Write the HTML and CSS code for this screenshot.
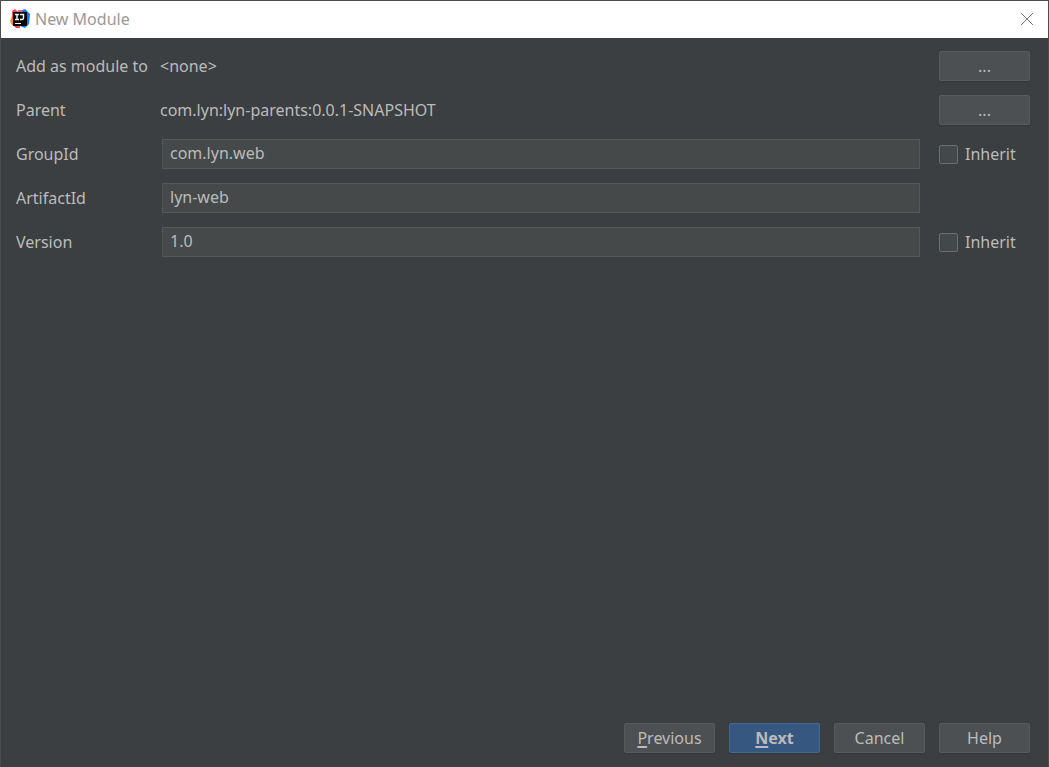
FILE: index.html
```html
<!DOCTYPE html>
<html lang="en">
<head>
<meta charset="utf-8">
<title>New Module</title>
<link rel="stylesheet" href="styles.css">
</head>
<body>
<div class="dialog">
  <header class="titlebar">
    <svg class="logo" viewBox="0 0 20 20" aria-hidden="true">
      <path d="M2 2 L5 0 L8 3 L8 11 L1 11 L2 7 Z" fill="#fc4a63"/>
      <path d="M0 11 L6 9 L6 18 L1 15 Z" fill="#f98b3c"/>
      <path d="M2 15 L10 15 L10 19 L6 19 Z" fill="#e9425a"/>
      <path d="M10 2 L15 0 L20 5 L19 15 L15 19 L10 17 Z" fill="#087cfa"/>
      <path d="M6 3 L9 1 L12 1 L13 4 Z" fill="#fe5f92"/>
      <rect x="3" y="3" width="14" height="14" fill="#080808"/>
      <path d="M5 5.500 H9 M7 5.500 V10.500 M5 10.500 H9 M10 5.500 H13.500 V9 Q13.500 10.500 12 10.500 H10" fill="none" stroke="#fff" stroke-width="1.400"/>
      <path d="M5 14.500 H11" stroke="#fff"/>
    </svg>
    <h1 class="title">New Module</h1>
    <button class="close" type="button" aria-label="Close">
      <svg class="close-icon" viewBox="0 0 14 14" aria-hidden="true"><path d="M1 1 L13 13 M13 1 L1 13" stroke="#777777" fill="none"/></svg>
    </button>
  </header>
  <form class="content">
    <div class="fields">
      <span class="label">Add as module to</span>
      <span class="value">&lt;none&gt;</span>
      <button class="button" type="button" aria-label="Choose module">...</button>

      <span class="label">Parent</span>
      <span class="value">com.lyn:lyn-parents:0.0.1-SNAPSHOT</span>
      <button class="button" type="button" aria-label="Choose parent">...</button>

      <label class="label" for="group">GroupId</label>
      <input class="text" id="group" type="text" value="com.lyn.web">
      <label class="inherit"><input class="check" type="checkbox">Inherit</label>

      <label class="label" for="artifact">ArtifactId</label>
      <input class="text" id="artifact" type="text" value="lyn-web">
      <span></span>

      <label class="label" for="version">Version</label>
      <input class="text" id="version" type="text" value="1.0">
      <label class="inherit"><input class="check" type="checkbox">Inherit</label>
    </div>
    <footer class="actions">
      <button class="button" type="button"><span class="key">P</span>revious</button>
      <button class="button primary" type="submit"><span class="key">N</span>ext</button>
      <button class="button" type="button">Cancel</button>
      <button class="button" type="button">Help</button>
    </footer>
  </form>
</div>
</body>
</html>
```

FILE: styles.css
```css
* {
  box-sizing: border-box;
}

body {
  margin: 0;
  background: #3c3f41;
  color: #bbbbbb;
  font: 16px/22px "Noto Sans", "Open Sans", sans-serif;
}

button,
input {
  color: inherit;
  font: inherit;
}

.dialog {
  display: flex;
  flex-direction: column;
  min-height: 100vh;
  border: 1px solid #4b4d50;
  border-bottom-color: #3c3f41;
}

.titlebar {
  display: flex;
  align-items: center;
  height: 37px;
  padding: 0 14px 2px 9px;
  background: #ffffff;
  color: #999999;
}

.logo {
  width: 20px;
  height: 20px;
  margin-right: 5px;
}

.title {
  flex: 1;
  margin: 0;
  font-size: 16px;
  font-weight: 400;
}

.close {
  display: flex;
  padding: 0;
  border: 0;
  background: none;
}

.close-icon {
  width: 14px;
  height: 14px;
}

.content {
  display: flex;
  flex: 1;
  flex-direction: column;
  justify-content: space-between;
  padding: 13px 18px 13px 15px;
}

.fields {
  display: grid;
  grid-template-columns: 144px 1fr 91px;
  grid-auto-rows: 30px;
  row-gap: 14px;
  align-items: center;
}

.text {
  width: auto;
  height: 30px;
  margin: 0 19px 0 2px;
  padding: 0 7px 2px;
  border: 1px solid #56595a;
  border-radius: 0;
  background: #45494a;
  outline: 0;
}

.button {
  width: 91px;
  height: 30px;
  padding: 0;
  border: 1px solid #585b5d;
  border-radius: 2px;
  background: #4c5052;
  box-shadow: 0 1px 1px #353839;
  line-height: 28px;
}

.primary {
  border-color: #42698f;
  background: #365880;
  font-weight: 700;
}

.key {
  text-decoration: underline;
  text-decoration-thickness: 2px;
  text-underline-offset: 2px;
}

.inherit {
  display: flex;
  align-items: center;
  gap: 7px;
}

.check {
  width: 19px;
  height: 19px;
  margin: 0;
  border: 1px solid #6b6e6f;
  border-radius: 2px;
  background: #43494a;
  appearance: none;
}

.check:checked {
  background: #365880;
}

.actions {
  display: flex;
  justify-content: flex-end;
  gap: 14px;
}
```
